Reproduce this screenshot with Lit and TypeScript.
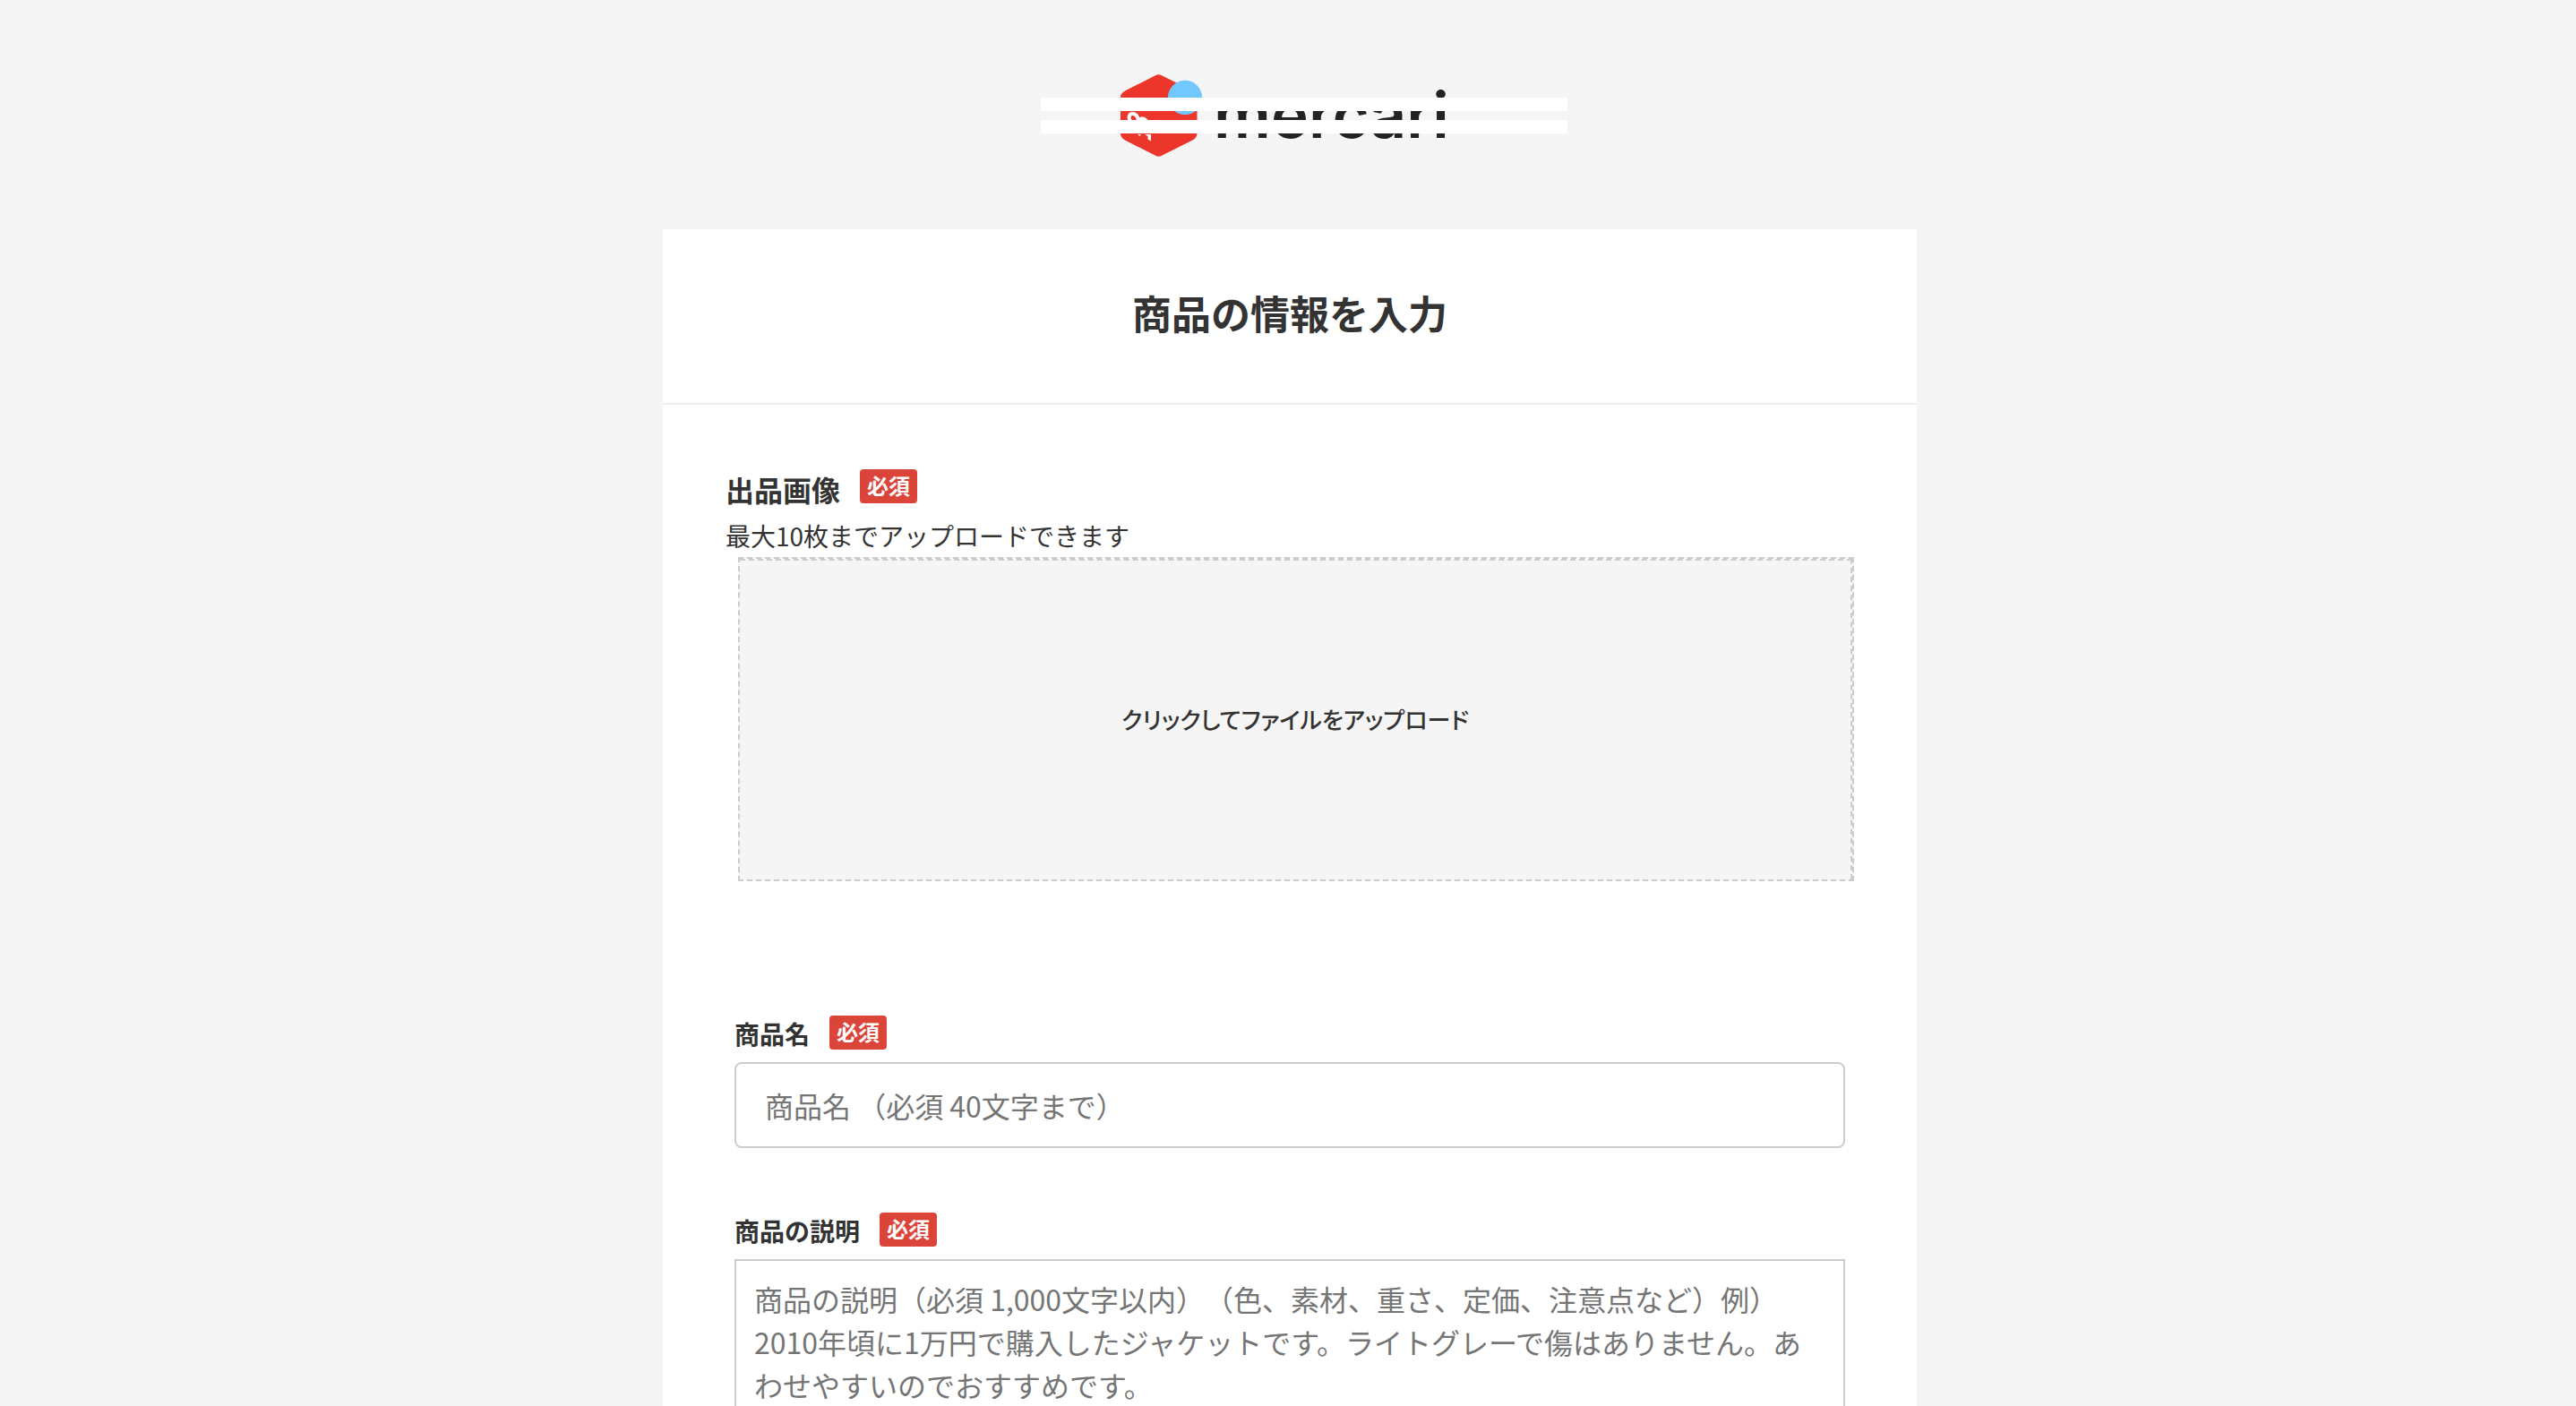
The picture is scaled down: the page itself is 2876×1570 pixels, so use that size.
import { LitElement, html, css, svg } from "lit";
import { customElement } from "lit/decorators.js";

const mark = svg`
  <path fill="#ec352b" d="M39 1.200 Q42.500 -0.600 46 1.200 L80.500 18.500 Q85.500 21 85.500 26 V66 Q85.500 71 80.500 73.500 L46 90.800 Q42.500 92.600 39 90.800 L5 73.500 Q0 71 0 66 V26 Q0 21 5 18.500 Z" />
  <circle cx="72" cy="26" r="19.200" fill="#72c8fc" />
  <path fill="none" stroke="#fff" stroke-width="4" stroke-linecap="round" d="M12 54 C7.500 48 10 43.500 14 44 C18 44.500 19.500 48 20 52" />
  <path fill="#fff" d="M18 50 C24 45.500 30 47.500 32 54 H18 Z M19 67 H23 L21.500 69 Z M27 67 H34 V74.500 L30.500 72.500 V69 Z" />
`;

@customElement("required-badge")
export class RequiredBadge extends LitElement {
  static styles = css`
    :host {
      display: block;
      padding: 0 8px 2px;
      border-radius: 4px;
      background: #db4539;
      color: #fff;
      font-size: 24px;
      font-weight: 700;
      line-height: 36px;
    }
  `;
  render() {
    return html`必須`;
  }
}

@customElement("site-logo")
export class SiteLogo extends LitElement {
  static styles = css`
    :host {
      display: flex;
      justify-content: center;
      padding: 82px 0 80px 32px;
    }
    .logo {
      position: relative;
      box-sizing: border-box;
      display: flex;
      gap: 16px;
      width: 588px;
      height: 94px;
      padding-left: 89px;
      text-decoration: none;
      color: #222;
    }
    .mark {
      width: 88px;
      height: 94px;
      overflow: visible;
    }
    .name {
      font-family: "Inter", sans-serif;
      font-size: 71px;
      font-weight: 600;
      line-height: 92px;
    }
    .bars {
      position: absolute;
      top: 27px;
      left: 0;
      right: 0;
      display: grid;
      gap: 10px;
    }
    .bar {
      height: 15px;
      background: #fff;
    }
  `;
  render() {
    return html`
      <a class="logo" href="#">
        <svg class="mark" viewBox="0 -1 88 94" aria-hidden="true">${mark}</svg>
        <span class="name">mercari</span>
        <span class="bars"><span class="bar"></span><span class="bar"></span></span>
      </a>
    `;
  }
}

@customElement("app-root")
export class AppRoot extends LitElement {
  static styles = css`
    :host {
      display: block;
      height: 100vh;
      overflow: hidden;
      padding-left: 4px;
      box-sizing: border-box;
      background: #f5f5f5;
      color: #333;
      font-family: "Noto Sans CJK JP", sans-serif;
      font-size: 28px;
      text-spacing-trim: space-all;
    }
    .card {
      max-width: 1400px;
      margin: 0 auto;
      background: #fff;
    }
    .title {
      margin: 0;
      padding: 60px 0 68px;
      border-bottom: 2px solid #eee;
      text-align: center;
      font-size: 44px;
      font-weight: 700;
      line-height: 66px;
    }
    .form {
      padding: 72px 80px 80px;
    }
    .images {
      margin: 0 -10px 150px;
    }
    .head {
      display: flex;
      align-items: flex-start;
      gap: 22px;
    }
    .label {
      font-weight: 700;
      line-height: 40px;
    }
    .label.large {
      font-size: 32px;
      line-height: 44px;
    }
    .note {
      margin: 6px 0 0;
      line-height: 48px;
    }
    .drop {
      display: grid;
      margin-left: 14px;
      border: 2px dashed #ccc;
      background: #f5f5f5;
    }
    .pick {
      height: 358px;
      padding: 0 0 4px;
      border: 0 dashed #ccc;
      border-width: 2px 2px 0 0;
      background: none;
      color: inherit;
      font: inherit;
      font-size: 26px;
      font-weight: 500;
      font-feature-settings: "palt";
      cursor: pointer;
    }
    .field {
      margin-bottom: 72px;
    }
    .field .head {
      margin-bottom: 12px;
    }
    .input,
    .area {
      display: block;
      box-sizing: border-box;
      width: 100%;
      border: 2px solid #ccc;
      background: #fff;
      color: inherit;
      font: inherit;
      font-size: 32px;
      text-spacing-trim: space-all;
    }
    .input {
      height: 96px;
      padding: 0 32px;
      border-radius: 8px;
    }
    .area {
      height: 300px;
      padding: 18px 20px;
      line-height: 48px;
      resize: none;
    }
    ::placeholder {
      color: #757575;
      opacity: 1;
    }
  `;
  render() {
    return html`
      <site-logo></site-logo>
      <main class="card">
        <h1 class="title">商品の情報を入力</h1>
        <form class="form">
          <section class="images">
            <div class="head">
              <span class="label large">出品画像</span>
              <required-badge></required-badge>
            </div>
            <p class="note">最大10枚までアップロードできます</p>
            <div class="drop">
              <button class="pick" type="button">クリックしてファイルをアップロード</button>
            </div>
          </section>
          <div class="field">
            <div class="head">
              <label class="label" for="name">商品名</label>
              <required-badge></required-badge>
            </div>
            <input class="input" id="name" type="text" placeholder="商品名 （必須 40文字まで）" />
          </div>
          <div class="field">
            <div class="head">
              <label class="label" for="description">商品の説明</label>
              <required-badge></required-badge>
            </div>
            <textarea
              class="area"
              id="description"
              placeholder="商品の説明（必須 1,000文字以内）（色、素材、重さ、定価、注意点など）例）&#10;2010年頃に1万円で購入したジャケットです。ライトグレーで傷はありません。あわせやすいのでおすすめです。"
            ></textarea>
          </div>
        </form>
      </main>
    `;
  }
}
